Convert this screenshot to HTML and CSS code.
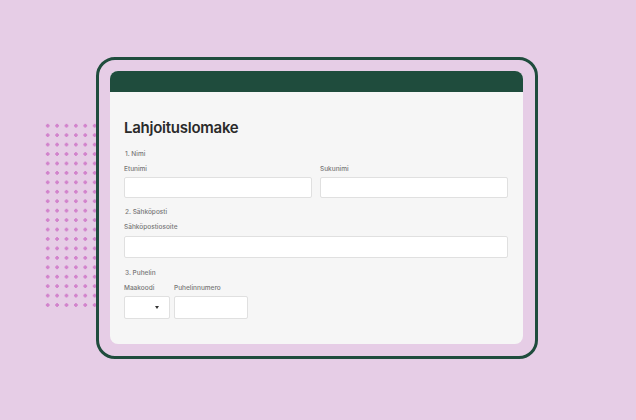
FILE: index.html
```html
<!DOCTYPE html>
<html lang="fi">
<head>
<meta charset="utf-8">
<title>Lahjoituslomake</title>
<link rel="stylesheet" href="styles.css">
</head>
<body>
<div class="stage">
  <div class="dots"></div>
  <div class="frame">
    <div class="card">
      <div class="card-header"></div>
      <div class="card-body">
        <h1 class="title">Lahjoituslomake</h1>

        <div class="section-label">1. Nimi</div>
        <div class="name-row">
          <div class="field">
            <div class="field-label">Etunimi</div>
            <div class="input"></div>
          </div>
          <div class="field">
            <div class="field-label">Sukunimi</div>
            <div class="input"></div>
          </div>
        </div>

        <div class="section-label gap-section">2. Sähköposti</div>
        <div class="field">
          <div class="field-label">Sähköpostiosoite</div>
          <div class="input input-email"></div>
        </div>

        <div class="section-label gap-section2">3. Puhelin</div>
        <div class="phone-row">
          <div class="field code">
            <div class="field-label">Maakoodi</div>
            <div class="input input-phone select"><span class="caret"></span></div>
          </div>
          <div class="field number">
            <div class="field-label">Puhelinnumero</div>
            <div class="input input-phone"></div>
          </div>
        </div>
      </div>
    </div>
  </div>
</div>
</body>
</html>
```
FILE: styles.css
```css
* { box-sizing: border-box; }
html, body {
  margin: 0;
  padding: 0;
}
body {
  width: 636px;
  height: 420px;
  background: #e6cde6;
  font-family: Inter, "Noto Sans", "Liberation Sans", sans-serif;
  overflow: hidden;
}
.stage {
  position: relative;
  width: 636px;
  height: 420px;
  padding: 57px 0 0 96px;
}
.dots {
  position: absolute;
  left: 43px;
  top: 120.6px;
  width: 57px;
  height: 189px;
  background-image: radial-gradient(circle, #d283cc 1.5px, transparent 1.9px);
  background-size: 9.4px 9.45px;
  z-index: 0;
}
.frame {
  position: relative;
  z-index: 1;
  width: 442px;
  height: 302px;
  border: 3px solid #1f4c3d;
  border-radius: 19px;
  background: #e6cde6;
  padding: 11px 12px 12px 11px;
}
.card {
  width: 413px;
  height: 273px;
  background: #f6f6f6;
  border-radius: 8px;
  overflow: hidden;
  display: flex;
  flex-direction: column;
}
.card-header {
  height: 21px;
  background: #1f4c3d;
  flex: none;
}
.card-body {
  padding: 27px 15px 0 14px;
  display: flex;
  flex-direction: column;
}
.title {
  margin: 0;
  font-size: 15px;
  line-height: 18px;
  font-weight: 600;
  color: #2a2a2a;
  letter-spacing: -0.25px;
}
.section-label {
  margin-top: 13px;
  padding-left: 1px;
  font-size: 6.5px;
  line-height: 8px;
  color: #777777;
  font-weight: 500;
}
.gap-section { margin-top: 10px; }
.gap-section2 { margin-top: 11px; }
.field {
  display: flex;
  flex-direction: column;
}
.field-label {
  margin-top: 7px;
  font-size: 6.5px;
  line-height: 8px;
  color: #777777;
  font-weight: 500;
}
.name-row {
  display: grid;
  grid-template-columns: 1fr 1fr;
  column-gap: 8px;
}
.input {
  margin-top: 4px;
  height: 21px;
  background: #ffffff;
  border: 1px solid #e0e0e0;
  border-radius: 2px;
}
.input-email { margin-top: 5px; height: 22px; }
.phone-row {
  display: flex;
  gap: 4px;
}
.code { width: 46px; }
.number { width: 74px; }
.input-phone { height: 23px; }
.select {
  position: relative;
}
.caret {
  position: absolute;
  left: 30px;
  top: 9px;
  width: 0;
  height: 0;
  border-left: 2.5px solid transparent;
  border-right: 2.5px solid transparent;
  border-top: 3.5px solid #333333;
}
```
